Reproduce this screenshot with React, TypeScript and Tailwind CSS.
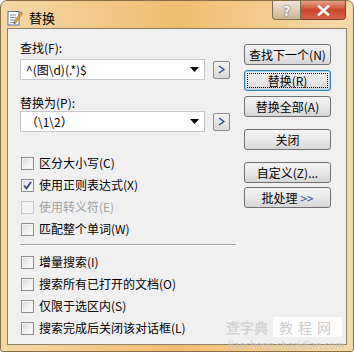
import React from "react";

const font = { fontFamily: '"Noto Sans CJK SC", "Noto Sans", sans-serif' };

function Btn({ label, focused = false }: { label: React.ReactNode; focused?: boolean }) {
  return (
    <div
      className={`h-[21px] w-[87px] rounded-[3px] border flex items-center justify-center text-[12px] leading-none text-black bg-gradient-to-b from-[#f4f4f4] via-[#e9e9e9] to-[#d6d6d6] ${
        focused ? "border-[#3c7fb1] shadow-[inset_0_0_0_1px_#9ad5f3]" : "border-[#707070]"
      }`}
    >
      {focused ? (
        <div className="w-[81px] h-[15px] border border-dotted border-black flex items-center justify-center">
          {label}
        </div>
      ) : (
        label
      )}
    </div>
  );
}

function Combo({ value }: { value: string }) {
  return (
    <div className="flex items-center gap-[8px]">
      <div className="w-[185px] h-[21px] bg-white border border-[#c5c7cc] flex items-center pl-[5px] pr-[5px] text-[12px] text-black">
        <span className="flex-1">{value}</span>
        <svg width="9" height="5" viewBox="0 0 9 5">
          <path d="M0 0 L9 0 L4.5 5 Z" fill="#000" />
        </svg>
      </div>
      <div className="w-[17px] h-[18px] rounded-[2px] border border-[#8a8a8a] bg-gradient-to-b from-[#f4f4f4] to-[#d8d8d8] flex items-center justify-center">
        <svg width="7" height="9" viewBox="0 0 7 9">
          <path d="M1 1 L6 4.5 L1 8" stroke="#1d3f9e" strokeWidth="1.2" fill="none" />
        </svg>
      </div>
    </div>
  );
}

function Check({ label, checked = false, disabled = false }: { label: string; checked?: boolean; disabled?: boolean }) {
  return (
    <div className="flex items-center gap-[5px] h-[22px]">
      <div
        className={`w-[13px] h-[13px] border flex items-center justify-center ${
          disabled
            ? "border-[#c6c6c6] bg-[#f4f4f4]"
            : "border-[#8e8f8f] bg-gradient-to-br from-[#d6d6d6] via-[#f0f0f0] to-[#fcfcfc] shadow-[inset_0_0_0_1px_#f4f4f4]"
        }`}
      >
        {checked && (
          <svg width="9" height="9" viewBox="0 0 9 9">
            <path d="M1 4.5 L3.5 7.5 L8 1" stroke="#3a4a7a" strokeWidth="1.8" fill="none" />
          </svg>
        )}
      </div>
      <span className={`text-[12px] ${disabled ? "text-[#a0a0a0]" : "text-black"}`}>{label}</span>
    </div>
  );
}

export default function App() {
  return (
    <div
      className="relative w-[354px] h-[352px] rounded-t-[7px] rounded-b-[3px] border border-[#8a6d45] bg-gradient-to-r from-[#f5d8a6] via-[#efbd6f] to-[#f6dbab] flex flex-col overflow-hidden"
      style={font}
    >
      {/* title bar */}
      <div className="h-[27px] flex items-start shrink-0">
        <div className="flex items-center gap-[6px] pl-[6px] pt-[7px]">
          <svg width="16" height="16" viewBox="0 0 16 16">
            <rect x="1" y="1.5" width="11" height="13.5" fill="#fdfdfd" stroke="#5f6f9a" />
            <path d="M3 5 H9 M3 7.5 H9 M3 10 H8 M3 12.5 H7" stroke="#7a8fc0" strokeWidth="1" />
            <path d="M7 12 L14 2 L15.5 3.2 L8.5 13.2 Z" fill="#f2b134" stroke="#8a5a10" strokeWidth="0.7" />
            <path d="M7 12 L6.6 14 L8.5 13.2 Z" fill="#333" />
          </svg>
          <span className="text-[13px] text-black">替换</span>
        </div>
        <div className="ml-auto flex mr-[7px]">
          <div className="w-[29px] h-[19px] rounded-bl-[4px] border border-t-0 border-[#7d6a50] bg-gradient-to-b from-[#f0e6d8] to-[#c8b496] flex items-center justify-center text-white text-[13px] font-bold leading-none [text-shadow:0_0_2px_#333]">
            ?
          </div>
          <div className="w-[45px] h-[19px] rounded-br-[4px] border border-t-0 border-l-0 border-[#7d4030] bg-gradient-to-b from-[#e8a08c] via-[#c9452b] to-[#d6644a] flex items-center justify-center">
            <svg width="13" height="11" viewBox="0 0 13 11">
              <path d="M2 1.5 L11 9.5 M11 1.5 L2 9.5" stroke="#fff" strokeWidth="2.6" strokeLinecap="square" />
            </svg>
          </div>
        </div>
      </div>

      {/* client area */}
      <div className="mx-[6px] h-[317px] border border-[#8f7f66] bg-[#f0f0f0] flex pl-[12px]">
        <div className="w-[218px] flex flex-col pt-[11px]">
          <div className="text-[12px] leading-[16px] text-black">查找(F):</div>
          <div className="mt-[3px]">
            <Combo value="^(图\d)(.*)$" />
          </div>
          <div className="mt-[15px] text-[12px] leading-[16px] text-black">替换为(P):</div>
          <div>
            <Combo value="（\1\2）" />
          </div>
          <div className="mt-[20px] flex flex-col pl-[1px]">
            <Check label="区分大小写(C)" />
            <Check label="使用正则表达式(X)" checked />
            <Check label="使用转义符(E)" disabled />
            <Check label="匹配整个单词(W)" />
          </div>
          <div className="mt-[4px] mb-[5px] h-[2px] w-[216px] border-t border-[#a0a0a0] border-b border-b-white" />
          <div className="flex flex-col pl-[1px]">
            <Check label="增量搜索(I)" />
            <Check label="搜索所有已打开的文档(O)" />
            <Check label="仅限于选区内(S)" />
            <Check label="搜索完成后关闭该对话框(L)" />
          </div>
        </div>
        <div className="ml-[6px] pt-[15px] flex flex-col">
          <Btn label="查找下一个(N)" />
          <div className="mt-[5px]">
            <Btn label="替换(R)" focused />
          </div>
          <div className="mt-[5px]">
            <Btn label="替换全部(A)" />
          </div>
          <div className="mt-[12px]">
            <Btn label="关闭" />
          </div>
          <div className="mt-[12px]">
            <Btn label="自定义(Z)..." />
          </div>
          <div className="mt-[4px]">
            <Btn label={<span>批处理 <span className="text-[#3050b0]">&gt;&gt;</span></span>} />
          </div>
        </div>
      </div>

      {/* watermark */}
      <div className="absolute left-[225px] top-[316px] flex flex-col items-start pointer-events-none">
        <div className="h-[20px] flex items-center gap-[5px]">
          <span className="text-[14px] leading-[20px] text-[#d4d4d4] font-bold">查字典</span>
          <span className="bg-white/90 px-[6px] text-[14px] leading-[20px] text-[#cccccc] tracking-[5px]">教程网</span>
        </div>
        <span className="mt-[1px] text-[10px] leading-[14px] text-[#c8c8c8] ml-[2px]">jiaocheng.chazidian.com</span>
      </div>
    </div>
  );
}
